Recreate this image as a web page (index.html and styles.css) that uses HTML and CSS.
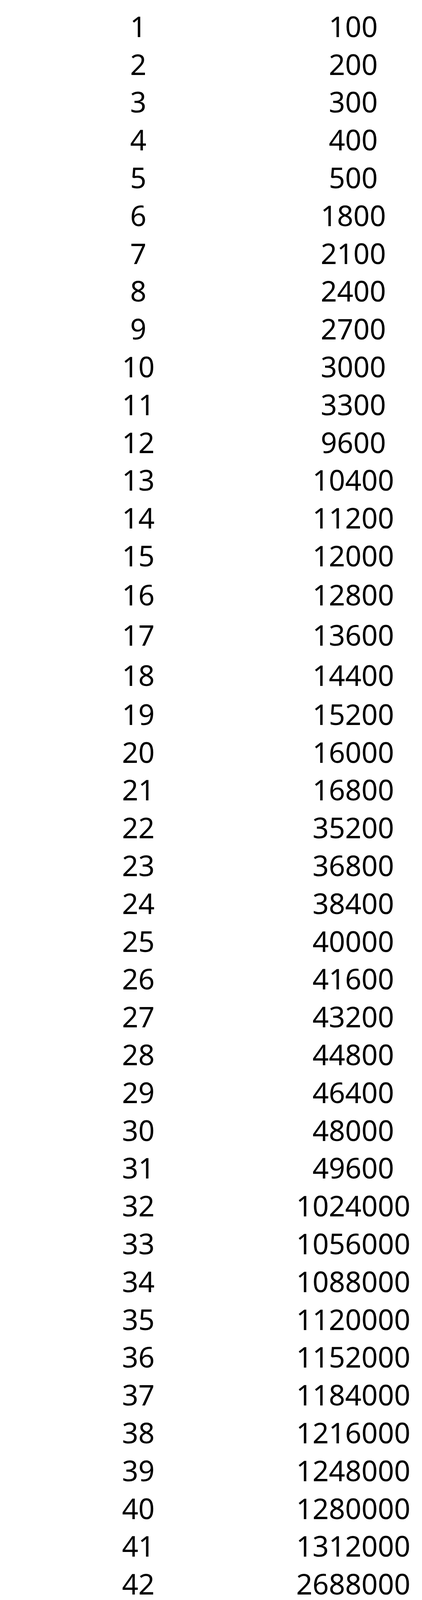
FILE: index.html
```html
<!DOCTYPE html>
<html lang="zh-CN">
<head>
<meta charset="utf-8">
<title>科研点等级表</title>
<link rel="stylesheet" href="styles.css">
</head>
<body>
<main class="sheet">
<table class="levels">
<tbody>
<tr><td>1</td><td>100</td></tr>
<tr><td>2</td><td>200</td></tr>
<tr><td>3</td><td>300</td></tr>
<tr><td>4</td><td>400</td></tr>
<tr><td>5</td><td>500</td></tr>
<tr><td>6</td><td>1800</td></tr>
<tr><td>7</td><td>2100</td></tr>
<tr><td>8</td><td>2400</td></tr>
<tr><td>9</td><td>2700</td></tr>
<tr><td>10</td><td>3000</td></tr>
<tr><td>11</td><td>3300</td></tr>
<tr><td>12</td><td>9600</td></tr>
<tr><td>13</td><td>10400</td></tr>
<tr><td>14</td><td>11200</td></tr>
<tr><td>15</td><td>12000</td></tr>
<tr class="tall"><td>16</td><td>12800</td></tr>
<tr class="tall"><td>17</td><td>13600</td></tr>
<tr class="tall"><td>18</td><td>14400</td></tr>
<tr><td>19</td><td>15200</td></tr>
<tr><td>20</td><td>16000</td></tr>
<tr><td>21</td><td>16800</td></tr>
<tr><td>22</td><td>35200</td></tr>
<tr><td>23</td><td>36800</td></tr>
<tr><td>24</td><td>38400</td></tr>
<tr><td>25</td><td>40000</td></tr>
<tr><td>26</td><td>41600</td></tr>
<tr><td>27</td><td>43200</td></tr>
<tr><td>28</td><td>44800</td></tr>
<tr><td>29</td><td>46400</td></tr>
<tr><td>30</td><td>48000</td></tr>
<tr><td>31</td><td>49600</td></tr>
<tr><td>32</td><td>1024000</td></tr>
<tr><td>33</td><td>1056000</td></tr>
<tr><td>34</td><td>1088000</td></tr>
<tr><td>35</td><td>1120000</td></tr>
<tr><td>36</td><td>1152000</td></tr>
<tr><td>37</td><td>1184000</td></tr>
<tr><td>38</td><td>1216000</td></tr>
<tr><td>39</td><td>1248000</td></tr>
<tr><td>40</td><td>1280000</td></tr>
<tr><td>41</td><td>1312000</td></tr>
<tr><td>42</td><td>2688000</td></tr>
<tr><td>43</td><td>2752000</td></tr>
<tr><td>44</td><td>2816000</td></tr>
<tr class="tall"><td>45</td><td>2880000</td></tr>
<tr class="tall"><td>46</td><td>2944000</td></tr>
<tr class="tall"><td>47</td><td>3008000</td></tr>
<tr class="tall"><td>48</td><td>3072000</td></tr>
<tr class="tall"><td>49</td><td>3136000</td></tr>
<tr class="tall"><td>50</td><td>3200000</td></tr>
<tr class="tall"><td>51</td><td>3264000</td></tr>
<tr class="tall"><td>52</td><td>6656000</td></tr>
<tr class="tall"><td>53</td><td>6784000</td></tr>
<tr class="tall"><td>54</td><td>6912000</td></tr>
<tr class="tall"><td>55</td><td>7040000</td></tr>
<tr class="tall"><td>56</td><td>7168000</td></tr>
<tr class="tall"><td>57</td><td>7296000</td></tr>
<tr class="tall"><td>58</td><td>7424000</td></tr>
<tr class="tall"><td>59</td><td>7552000</td></tr>
<tr class="tall"><td>60</td><td>7680000</td></tr>
<tr class="total"><td>1-60级所需科研点</td><td>106524800</td></tr>
</tbody>
</table>
</main>
</body>
</html>
```

FILE: styles.css
```css
body {
  margin: 0;
  background: #ffffff;
  color: #000000;
  font-family: "Noto Sans", "Noto Sans CJK SC", sans-serif;
  font-size: 73px;
  font-weight: 400;
}

.sheet {
  display: block;
  width: 1080px;
  overflow: hidden;
  padding-top: 18px;
}

.levels {
  border-collapse: collapse;
  border-spacing: 0;
  margin-left: 26px;
}

.levels tr {
  height: 96.8px;
}

.levels tr.tall {
  height: 103px;
}

.levels tr.total {
  height: 104px;
}

.levels td {
  padding: 0 34.5px;
  line-height: 73px;
  text-align: center;
  vertical-align: middle;
  white-space: nowrap;
}
```
